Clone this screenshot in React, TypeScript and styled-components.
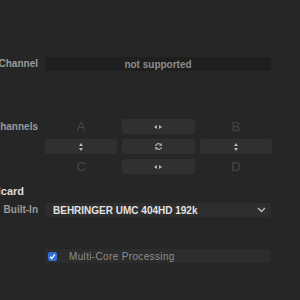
import styled, { createGlobalStyle } from "styled-components";

const GlobalStyle = createGlobalStyle`
  html, body {
    margin: 0;
    padding: 0;
    background: #262626;
    overflow: hidden;
  }
  #root {
    width: 300px;
    height: 300px;
  }
`;

const Panel = styled.div`
  width: 300px;
  height: 300px;
  box-sizing: border-box;
  padding-top: 57px;
  background: #262626;
  font-family: "Liberation Sans", Arial, sans-serif;
  overflow: hidden;
  display: flex;
  flex-direction: column;
`;

const Row = styled.div<{ $top?: number }>`
  display: flex;
  align-items: flex-start;
  margin-top: ${({ $top }) => $top ?? 0}px;
`;

const Label = styled.div<{ $offset?: number }>`
  width: 45px;
  flex: 0 0 45px;
  box-sizing: border-box;
  padding-right: 7px;
  display: flex;
  justify-content: flex-end;
  white-space: nowrap;
  font-size: 10px;
  line-height: 14px;
  font-weight: 700;
  color: #9a9a9a;
  padding-top: ${({ $offset }) => $offset ?? 0}px;
`;

const Heading = styled.div`
  width: 24px;
  display: flex;
  justify-content: flex-end;
  white-space: nowrap;
  font-size: 11px;
  line-height: 14px;
  font-weight: 700;
  color: #dcdcdc;
`;

const Field = styled.div<{ $bg: string }>`
  width: 226px;
  height: 14px;
  border-radius: 2px;
  background: ${({ $bg }) => $bg};
  display: flex;
  align-items: center;
  box-sizing: border-box;
  font-size: 10px;
`;

const Readout = styled(Field)`
  justify-content: center;
  color: #8c8c8c;
  font-weight: 700;
`;

const Select = styled(Field)`
  justify-content: space-between;
  padding: 0 5px 0 8px;
  color: #e2e2e2;
  font-weight: 700;
`;

const CheckRow = styled(Field)`
  padding-left: 3px;
  gap: 12px;
  color: #8e8e8e;
  letter-spacing: 0.35px;
`;

const Check = styled.div`
  width: 9px;
  height: 9px;
  border-radius: 2px;
  background: #2f6fd6;
  display: flex;
  align-items: center;
  justify-content: center;
`;

const Grid = styled.div`
  width: 227px;
  display: grid;
  grid-template-columns: repeat(3, 1fr);
  grid-template-rows: repeat(3, 15px);
  gap: 5px;
`;

const Letter = styled.div`
  display: flex;
  align-items: center;
  justify-content: center;
  font-size: 13px;
  color: #464646;
`;

const Btn = styled.div`
  border-radius: 2px;
  background: #303030;
  display: flex;
  align-items: center;
  justify-content: center;
`;

const HArrows = () => (
  <svg width="8" height="4" viewBox="0 0 8 4">
    <path d="M0 2 L3 0 L3 4 Z M8 2 L5 0 L5 4 Z" fill="#b8b8b8" />
  </svg>
);

const VArrows = () => (
  <svg width="4" height="8" viewBox="0 0 4 8">
    <path d="M2 0 L4 3 L0 3 Z M2 8 L4 5 L0 5 Z" fill="#b8b8b8" />
  </svg>
);

const Swap = () => (
  <svg width="9" height="9" viewBox="0 0 9 9">
    <path
      d="M1.5 4 A3 3 0 0 1 7 3 M7.5 5 A3 3 0 0 1 2 6"
      stroke="#b0b0b0"
      strokeWidth="1.2"
      fill="none"
    />
    <path d="M7.8 1 L7.8 4 L5 3.4 Z M1.2 8 L1.2 5 L4 5.6 Z" fill="#b0b0b0" />
  </svg>
);

const Chevron = () => (
  <svg width="9" height="6" viewBox="0 0 9 6">
    <path d="M1 1 L4.5 4.5 L8 1" stroke="#bdbdbd" strokeWidth="1.4" fill="none" />
  </svg>
);

const Tick = () => (
  <svg width="7" height="7" viewBox="0 0 7 7">
    <path d="M1 3.8 L2.8 5.5 L6 1.3" stroke="#ffffff" strokeWidth="1.3" fill="none" />
  </svg>
);

export default function App() {
  return (
    <>
      <GlobalStyle />
      <Panel>
        <Row>
          <Label>Output Channel</Label>
          <Readout $bg="#1f1f1f">not supported</Readout>
        </Row>

        <Row $top={48}>
          <Label $offset={1}>Input Channels</Label>
          <Grid>
            <Letter>A</Letter>
            <Btn><HArrows /></Btn>
            <Letter>B</Letter>
            <Btn><VArrows /></Btn>
            <Btn><Swap /></Btn>
            <Btn><VArrows /></Btn>
            <Letter>C</Letter>
            <Btn><HArrows /></Btn>
            <Letter>D</Letter>
          </Grid>
        </Row>

        <Row $top={10}>
          <Heading>Soundcard</Heading>
        </Row>

        <Row $top={5}>
          <Label>Built-In</Label>
          <Select $bg="#2e2e2e">
            <span>BEHRINGER UMC 404HD 192k</span>
            <Chevron />
          </Select>
        </Row>

        <Row $top={32}>
          <Label />
          <CheckRow $bg="#2c2c2c">
            <Check><Tick /></Check>
            <span>Multi-Core Processing</span>
          </CheckRow>
        </Row>
      </Panel>
    </>
  );
}
